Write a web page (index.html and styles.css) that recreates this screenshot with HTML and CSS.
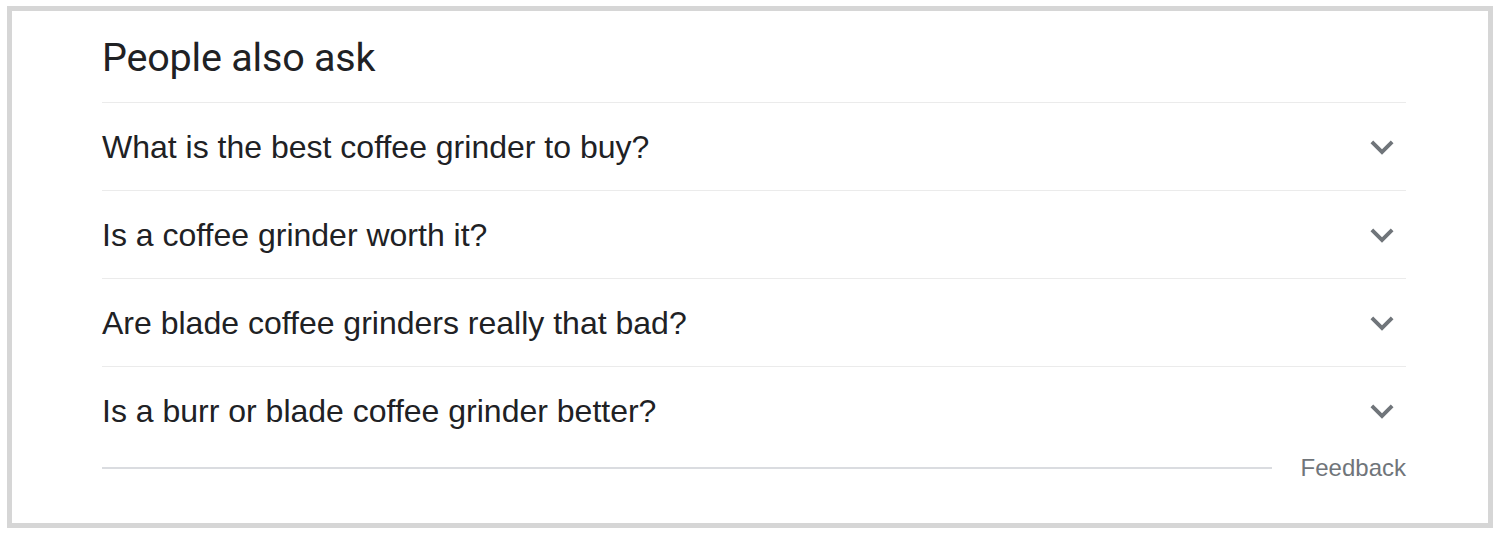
FILE: index.html
```html
<!DOCTYPE html>
<html lang="en">
<head>
<meta charset="utf-8">
<title>People also ask</title>
<link rel="stylesheet" href="styles.css">
</head>
<body>
<div class="card">
  <h2 class="title">People also ask</h2>
  <div class="list">
    <div class="row"><span class="q">What is the best coffee grinder to buy?</span><svg class="chev" viewBox="0 0 24 24"><path d="M16.59 8.59L12 13.17 7.41 8.59 6 10l6 6 6-6z"/></svg></div>
    <div class="row"><span class="q">Is a coffee grinder worth it?</span><svg class="chev" viewBox="0 0 24 24"><path d="M16.59 8.59L12 13.17 7.41 8.59 6 10l6 6 6-6z"/></svg></div>
    <div class="row"><span class="q">Are blade coffee grinders really that bad?</span><svg class="chev" viewBox="0 0 24 24"><path d="M16.59 8.59L12 13.17 7.41 8.59 6 10l6 6 6-6z"/></svg></div>
    <div class="row"><span class="q">Is a burr or blade coffee grinder better?</span><svg class="chev" viewBox="0 0 24 24"><path d="M16.59 8.59L12 13.17 7.41 8.59 6 10l6 6 6-6z"/></svg></div>
  </div>
  <div class="foot">
    <div class="foot-line"></div>
    <span class="feedback">Feedback</span>
  </div>
</div>
</body>
</html>
```
FILE: styles.css
```css
html, body {
  margin: 0;
  padding: 0;
  background: #ffffff;
}
body {
  padding: 6px 9px 0 7px;
}
.card {
  width: 1486px;
  height: 522px;
  box-sizing: border-box;
  border: 5px solid #d6d6d6;
  padding: 0 82px 0 90px;
  background: #fff;
}
.title {
  margin: 0;
  height: 91px;
  box-sizing: border-box;
  padding-top: 23px;
  font-family: Roboto, "Open Sans", sans-serif;
  font-weight: 400;
  font-size: 39.5px;
  line-height: 48px;
  color: #202124;
  letter-spacing: -0.2px;
}
.row {
  height: 88px;
  box-sizing: border-box;
  border-top: 1px solid #ebebeb;
  display: flex;
  align-items: center;
  justify-content: space-between;
}
.q {
  font-family: "Liberation Sans", Arial, sans-serif;
  font-size: 32px;
  color: #202124;
  line-height: 40px;
}
.chev {
  width: 46px;
  height: 46px;
  fill: #70757a;
  margin-right: 1px;
  flex: none;
}
.foot {
  display: flex;
  align-items: center;
  height: 28px;
}
.foot-line {
  flex: 1;
  height: 2px;
  background: #dadce0;
  margin-right: 29px;
}
.feedback {
  font-family: "Liberation Sans", Arial, sans-serif;
  font-size: 24px;
  color: #70757a;
  line-height: 28px;
}
```
